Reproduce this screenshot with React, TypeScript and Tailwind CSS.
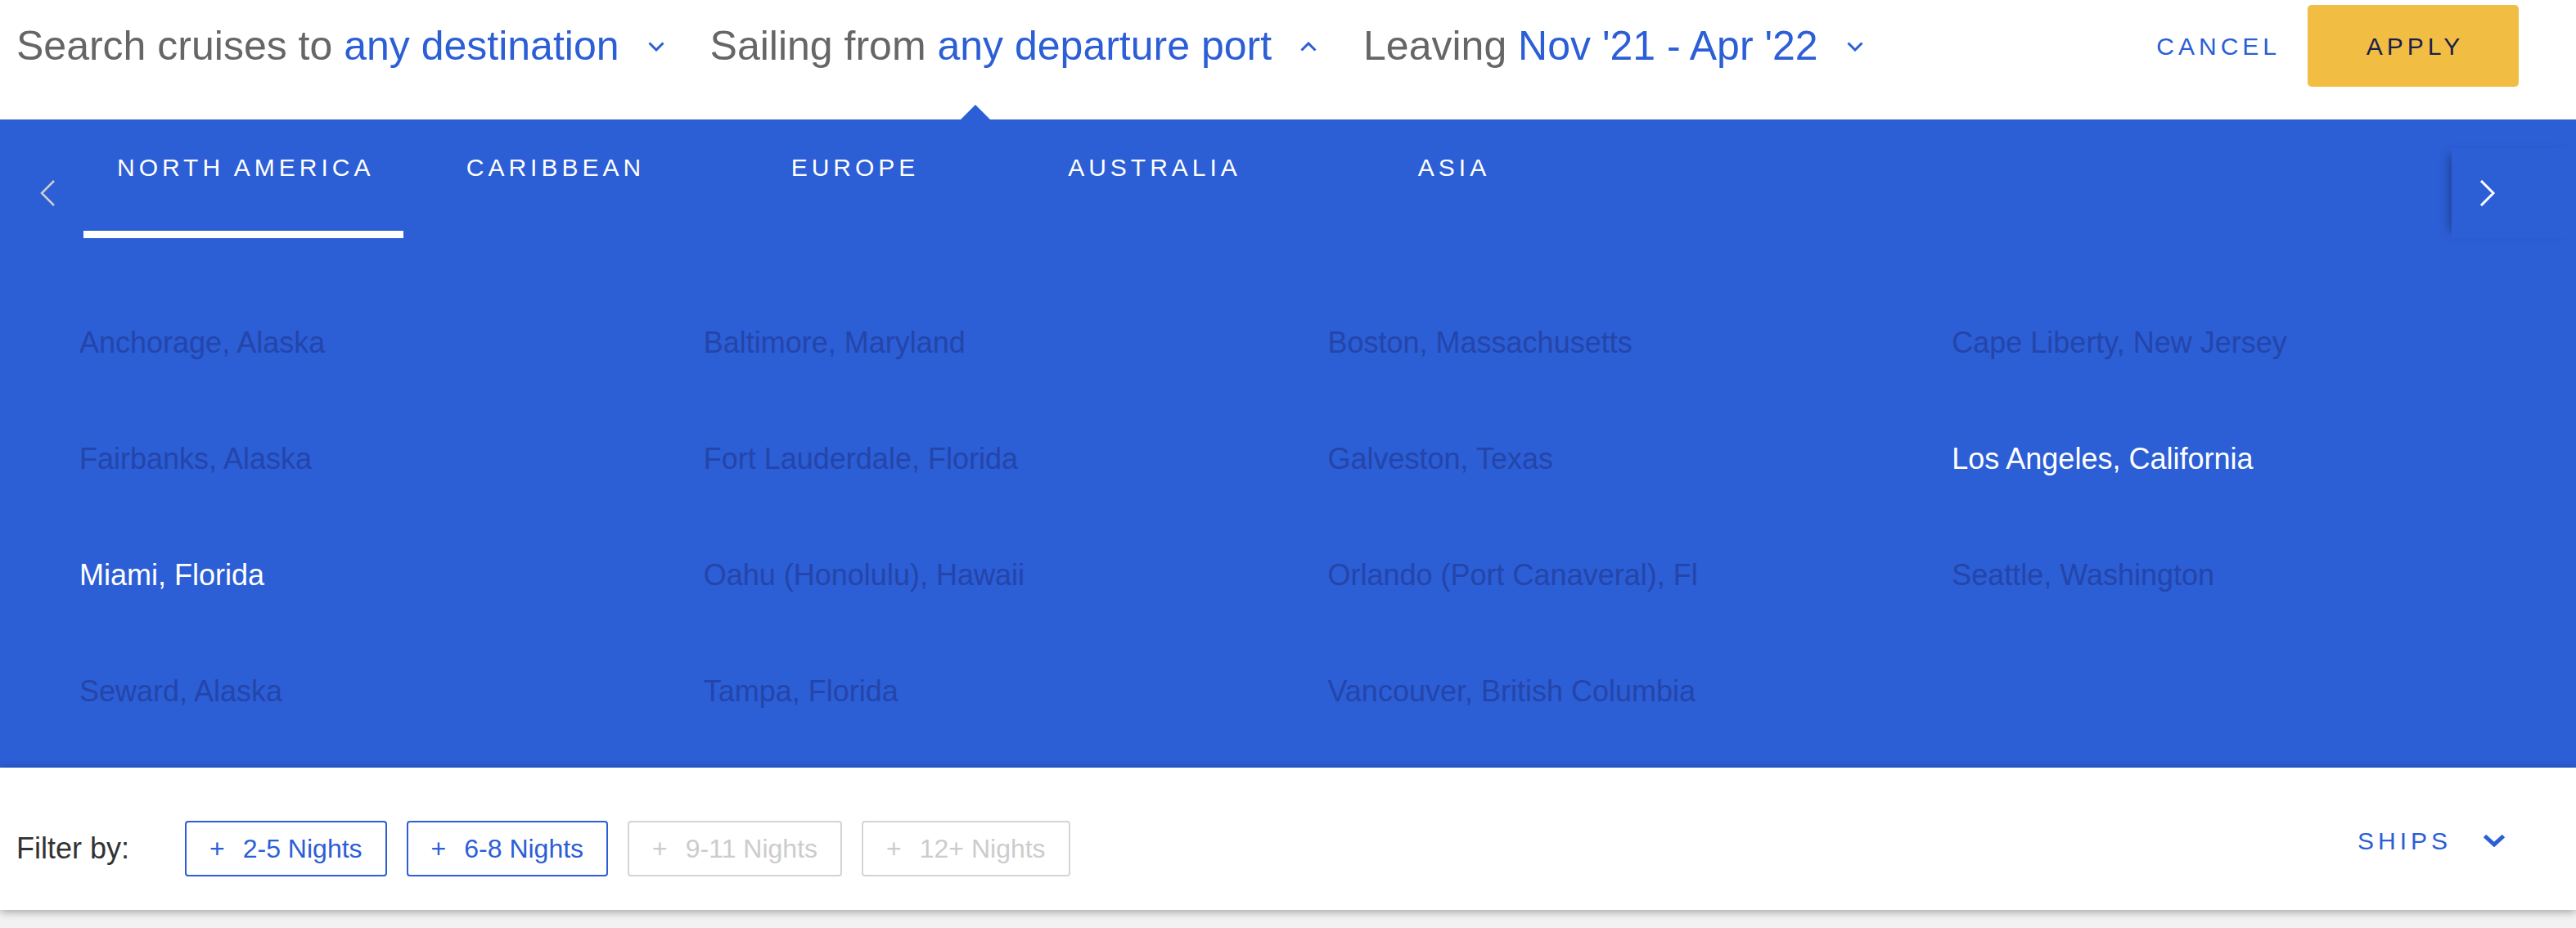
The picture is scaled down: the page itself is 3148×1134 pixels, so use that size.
import React from 'react'

const cities = [
  { name: 'Anchorage, Alaska' },
  { name: 'Baltimore, Maryland' },
  { name: 'Boston, Massachusetts' },
  { name: 'Cape Liberty, New Jersey' },
  { name: 'Fairbanks, Alaska' },
  { name: 'Fort Lauderdale, Florida' },
  { name: 'Galveston, Texas' },
  { name: 'Los Angeles, California', active: true },
  { name: 'Miami, Florida', active: true },
  { name: 'Oahu (Honolulu), Hawaii' },
  { name: 'Orlando (Port Canaveral), Fl' },
  { name: 'Seattle, Washington' },
  { name: 'Seward, Alaska' },
  { name: 'Tampa, Florida' },
  { name: 'Vancouver, British Columbia' },
]

const tabs = ['NORTH AMERICA', 'CARIBBEAN', 'EUROPE', 'AUSTRALIA', 'ASIA']

const nights = [
  { label: '2-5 Nights', enabled: true },
  { label: '6-8 Nights', enabled: true },
  { label: '9-11 Nights', enabled: false },
  { label: '12+ Nights', enabled: false },
]

function Chevron({ up = false }: { up?: boolean }) {
  return (
    <svg width="20" height="12" viewBox="0 0 20 12" className="shrink-0">
      <polyline
        points={up ? '1.5,10.5 10,2 18.5,10.5' : '1.5,1.5 10,10 18.5,1.5'}
        fill="none"
        stroke="#2c5ed6"
        strokeWidth="3"
      />
    </svg>
  )
}

function HeaderGroup({ label, value, up }: { label: string; value: string; up?: boolean }) {
  return (
    <div className="flex items-center">
      <span className="text-[50px] text-[#666666] whitespace-pre">
        {label} <span className="text-[#2c5ed6]">{value}</span>
      </span>
      <span className="ml-[35px] mt-[2px]">
        <Chevron up={up} />
      </span>
    </div>
  )
}

export default function App() {
  return (
    <div className="w-[3148px] h-[1134px] bg-[#f2f2f2] font-['Liberation_Sans',Arial,sans-serif] overflow-hidden">
      {/* top search bar */}
      <header className="relative h-[146px] bg-white">
        <div className="flex items-center h-[112px] pl-[20px] pr-[70px]">
          <HeaderGroup label="Search cruises to" value="any destination" />
          <div className="ml-[56px]">
            <HeaderGroup label="Sailing from" value="any departure port" up />
          </div>
          <div className="ml-[57px]">
            <HeaderGroup label="Leaving" value="Nov '21 - Apr '22" />
          </div>
          <button className="ml-auto text-[30px] tracking-[5px] text-[#2c5ed6]">CANCEL</button>
          <button className="ml-[33px] w-[258px] h-[100px] rounded-[5px] bg-[#f2bd43] text-[30px] tracking-[5px] text-[#1b1f4b] pl-[5px]">
            APPLY
          </button>
        </div>
        <div className="absolute left-[1174px] bottom-0 w-0 h-0 border-x-[18px] border-b-[18px] border-x-transparent border-b-[#2c5ed6]" />
      </header>

      {/* departure port panel */}
      <section className="bg-[#2c5ed6] h-[792px]">
        <div className="flex h-[145px]">
          <div className="w-[102px] self-end h-[110px] flex items-center pl-[48px]">
            <svg width="20" height="32" viewBox="0 0 20 32">
              <polyline points="18,1 3,16 18,31" fill="none" stroke="#cfcfcf" strokeWidth="2.5" />
            </svg>
          </div>
          <nav className="flex flex-1">
            {tabs.map((t, i) => (
              <div key={t} className="min-w-[366px] flex flex-col">
                <span className="pt-[36px] px-[36px] text-center text-[30px] tracking-[5px] text-white whitespace-nowrap pl-[41px]">
                  {t}
                </span>
                <div className={`mt-auto h-[9px] w-full ${i === 0 ? 'bg-white' : ''}`} />
              </div>
            ))}
          </nav>
          <div className="w-[152px] self-end h-[110px] flex items-center pl-[34px] bg-[#2c5ed6] shadow-[-10px_0_12px_-8px_rgba(0,0,0,0.35)]">
            <svg width="20" height="32" viewBox="0 0 20 32">
              <polyline points="2,1 17,16 2,31" fill="none" stroke="#ffffff" strokeWidth="3" />
            </svg>
          </div>
        </div>

        <div className="grid grid-cols-4 pl-[97px] pt-[57px]">
          {cities.map((c) => (
            <div
              key={c.name}
              className={`h-[142px] leading-[142px] text-[36px] whitespace-nowrap ${
                c.active ? 'text-white' : 'text-[#2445a9]'
              }`}
            >
              {c.name}
            </div>
          ))}
        </div>
      </section>

      {/* filters */}
      <div className="relative z-10 h-[174px] bg-white shadow-[0_2px_10px_rgba(0,0,0,0.35)]">
        <div className="flex items-center h-[68px] mt-[65px] absolute inset-x-0 top-0 pl-[20px] pr-[86px]">
          <span className="text-[36px] text-[#333333]">Filter by:</span>
          <div className="flex gap-[24px] ml-[68px]">
            {nights.map((n) => (
              <button
                key={n.label}
                className={`h-[68px] flex items-center px-[28px] rounded-[4px] border-2 text-[32px] ${
                  n.enabled ? 'border-[#2c5ed6] text-[#2c5ed6]' : 'border-[#d4d4d4] text-[#cccccc]'
                }`}
              >
                <span>+</span>
                <span className="ml-[22px]">{n.label}</span>
              </button>
            ))}
          </div>
          <div className="ml-auto flex items-center -mt-[20px]">
            <span className="text-[30px] tracking-[5px] text-[#2c5ed6]">SHIPS</span>
            <svg width="28" height="16" viewBox="0 0 28 16" className="ml-[38px]">
              <polyline points="2.5,2.5 14,13 25.5,2.5" fill="none" stroke="#2c5ed6" strokeWidth="5" />
            </svg>
          </div>
        </div>
      </div>
    </div>
  )
}
